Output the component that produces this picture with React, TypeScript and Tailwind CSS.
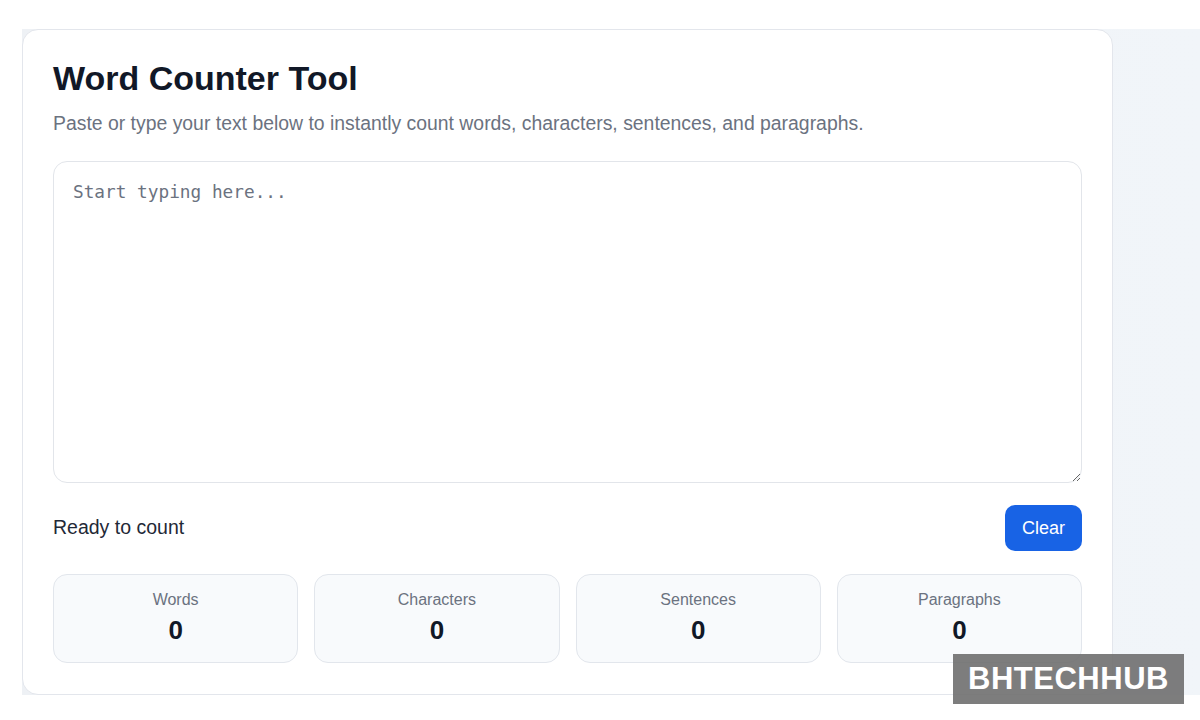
import React from "react";

const stats = ["Words", "Characters", "Sentences", "Paragraphs"];

export default function App() {
  return (
    <div
      className="w-[1200px] h-[720px] bg-white relative overflow-hidden"
      style={{ fontFamily: '"Liberation Sans", Arial, sans-serif' }}
    >
      <div className="pt-[29px] pl-[22px]">
        <div className="h-[666px] bg-gradient-to-r from-[#eef1f5] to-[#f1f5f9] flex">
          <div className="w-[1091px] h-[666px] bg-white border border-[#e3e6ec] rounded-[16px] px-[30px] pt-[28px]">
            <h1 className="text-[34px] leading-[40px] font-bold text-[#111827]">Word Counter Tool</h1>
            <p className="mt-[12px] text-[19.4px] leading-[26px] text-[#6b7280]">
              Paste or type your text below to instantly count words, characters, sentences, and paragraphs.
            </p>
            <textarea
              className="mt-[25px] block w-full h-[322px] border border-[#e2e5ea] rounded-[14px] px-[19px] py-[18px] text-[17.75px] leading-[24px] text-[#111827] placeholder:text-[#6b7280] outline-none"
              style={{ fontFamily: '"DejaVu Sans Mono", "Liberation Mono", monospace' }}
              placeholder="Start typing here..."
            />
            <div className="mt-[22px] flex items-center justify-between">
              <span className="text-[19.5px] text-[#1f2937]">Ready to count</span>
              <button className="h-[46px] w-[77px] rounded-[10px] bg-[#1863e5] text-white text-[18px]">Clear</button>
            </div>
            <div className="mt-[23px] grid grid-cols-4 gap-[16px]">
              {stats.map((s) => (
                <div
                  key={s}
                  className="h-[89px] rounded-[14px] border border-[#e2e6ec] bg-[#f8fafc] flex flex-col items-center pt-[15px]"
                >
                  <span className="text-[16px] leading-[20px] text-[#6b7280]">{s}</span>
                  <span className="mt-[5px] text-[26px] leading-[30px] font-bold text-[#111827]">0</span>
                </div>
              ))}
            </div>
          </div>
        </div>
      </div>
      <div className="absolute left-[953px] top-[654px] w-[231px] h-[50px] bg-[#6f6f6f]/90 flex items-center justify-center">
        <span className="text-white font-bold text-[31px] tracking-[0.5px]">BHTECHHUB</span>
      </div>
    </div>
  );
}
